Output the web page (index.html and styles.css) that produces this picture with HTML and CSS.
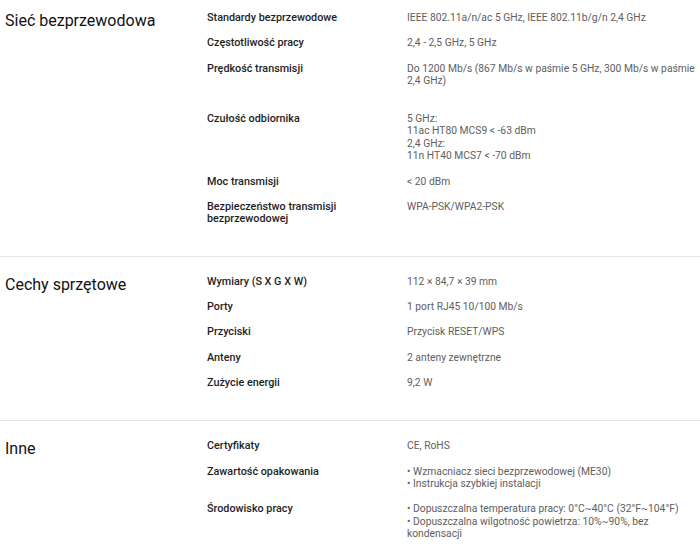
FILE: index.html
```html
<!DOCTYPE html>
<html lang="pl">
<head>
<meta charset="utf-8">
<title>Specyfikacja</title>
<link rel="stylesheet" href="styles.css">
</head>
<body>
<div class="specs">
  <section class="group first">
    <h2 class="group-title">Sieć bezprzewodowa</h2>
    <div class="rows">
      <div class="row"><div class="label">Standardy bezprzewodowe</div><div class="value">IEEE 802.11a/n/ac 5 GHz, IEEE 802.11b/g/n 2,4 GHz</div></div>
      <div class="row"><div class="label">Częstotliwość pracy</div><div class="value">2,4 - 2,5 GHz, 5 GHz</div></div>
      <div class="row"><div class="label">Prędkość transmisji</div><div class="value extra">Do 1200 Mb/s (867 Mb/s w paśmie 5 GHz, 300 Mb/s w paśmie 2,4 GHz)</div></div>
      <div class="row"><div class="label">Czułość odbiornika</div><div class="value">5 GHz:<br>11ac HT80 MCS9 &lt; -63 dBm<br>2,4 GHz:<br>11n HT40 MCS7 &lt; -70 dBm</div></div>
      <div class="row"><div class="label">Moc transmisji</div><div class="value">&lt; 20 dBm</div></div>
      <div class="row"><div class="label">Bezpieczeństwo transmisji bezprzewodowej</div><div class="value">WPA-PSK/WPA2-PSK</div></div>
    </div>
  </section>
  <section class="group">
    <h2 class="group-title">Cechy sprzętowe</h2>
    <div class="rows">
      <div class="row"><div class="label">Wymiary (S X G X W)</div><div class="value">112 × 84,7 × 39 mm</div></div>
      <div class="row"><div class="label">Porty</div><div class="value">1 port RJ45 10/100 Mb/s</div></div>
      <div class="row"><div class="label">Przyciski</div><div class="value">Przycisk RESET/WPS</div></div>
      <div class="row"><div class="label">Anteny</div><div class="value">2 anteny zewnętrzne</div></div>
      <div class="row"><div class="label">Zużycie energii</div><div class="value">9,2 W</div></div>
    </div>
  </section>
  <section class="group">
    <h2 class="group-title">Inne</h2>
    <div class="rows">
      <div class="row"><div class="label">Certyfikaty</div><div class="value">CE, RoHS</div></div>
      <div class="row"><div class="label">Zawartość opakowania</div><div class="value">• Wzmacniacz sieci bezprzewodowej (ME30)<br>• Instrukcja szybkiej instalacji</div></div>
      <div class="row"><div class="label">Środowisko pracy</div><div class="value">• Dopuszczalna temperatura pracy: 0°C~40°C (32°F~104°F)<br>• Dopuszczalna wilgotność powietrza: 10%~90%, bez kondensacji</div></div>
    </div>
  </section>
</div>
</body>
</html>
```

FILE: styles.css
```css
html, body {
  margin: 0;
  padding: 0;
  background: #fff;
}
body {
  font-family: Roboto, "Liberation Sans", Arial, sans-serif;
  font-size: 11px;
  line-height: 12.5px;
  color: #222;
}
.specs {
  width: 700px;
}
.group {
  display: grid;
  grid-template-columns: 202px 1fr;
  padding: 19px 0 31px 5px;
  border-top: 1px solid #e6e6e6;
}
.group.first {
  padding-top: 12px;
  padding-bottom: 30px;
  border-top: none;
}
.group-title {
  margin: 0;
  font-size: 16px;
  line-height: 18px;
  font-weight: 400;
  color: #111;
}
.rows {
  display: flex;
  flex-direction: column;
  gap: 12.75px;
}
.row {
  display: grid;
  grid-template-columns: 200px 1fr;
}
.label {
  padding-right: 20px;
  color: #1e1e1e;
  font-weight: 500;
  font-size: 10.8px;
}
.value {
  padding-right: 5px;
  color: #5e5e5e;
  font-size: 10.3px;
}
.value.extra {
  padding-bottom: 12.5px;
}
```
